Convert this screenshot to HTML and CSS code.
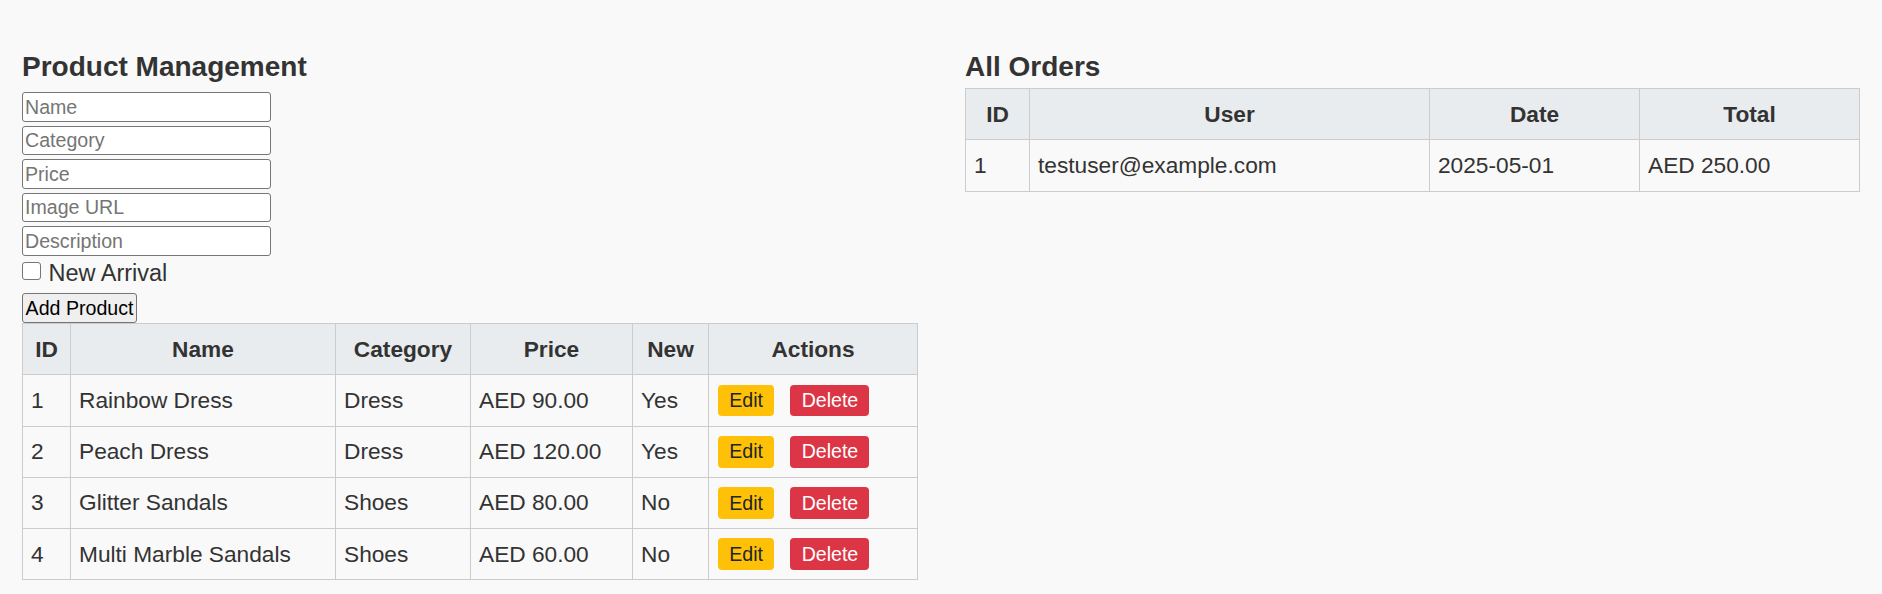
FILE: index.html
```html
<!DOCTYPE html>
<html lang="en">
<head>
<meta charset="utf-8">
<title>Admin</title>
<link rel="stylesheet" href="styles.css">
</head>
<body>
<div class="page">
  <section class="panel">
    <h2 class="title">Product Management</h2>
    <form class="product-form">
      <input class="field" type="text" placeholder="Name">
      <input class="field" type="text" placeholder="Category">
      <input class="field" type="text" placeholder="Price">
      <input class="field" type="text" placeholder="Image URL">
      <input class="field" type="text" placeholder="Description">
      <label class="check"><input class="checkbox" type="checkbox"><span>New Arrival</span></label>
      <button class="btn-add" type="button">Add Product</button>
    </form>
    <table class="grid products-table">
      <colgroup>
        <col class="p-id"><col class="p-name"><col class="p-cat"><col class="p-price"><col class="p-new"><col class="p-act">
      </colgroup>
      <thead>
        <tr><th>ID</th><th>Name</th><th>Category</th><th>Price</th><th>New</th><th>Actions</th></tr>
      </thead>
      <tbody>
        <tr><td>1</td><td>Rainbow Dress</td><td>Dress</td><td>AED 90.00</td><td>Yes</td><td class="actions-cell"><div class="actions"><button class="btn btn-edit" type="button">Edit</button><button class="btn btn-delete" type="button">Delete</button></div></td></tr>
        <tr><td>2</td><td>Peach Dress</td><td>Dress</td><td>AED 120.00</td><td>Yes</td><td class="actions-cell"><div class="actions"><button class="btn btn-edit" type="button">Edit</button><button class="btn btn-delete" type="button">Delete</button></div></td></tr>
        <tr><td>3</td><td>Glitter Sandals</td><td>Shoes</td><td>AED 80.00</td><td>No</td><td class="actions-cell"><div class="actions"><button class="btn btn-edit" type="button">Edit</button><button class="btn btn-delete" type="button">Delete</button></div></td></tr>
        <tr><td>4</td><td>Multi Marble Sandals</td><td>Shoes</td><td>AED 60.00</td><td>No</td><td class="actions-cell"><div class="actions"><button class="btn btn-edit" type="button">Edit</button><button class="btn btn-delete" type="button">Delete</button></div></td></tr>
      </tbody>
    </table>
  </section>
  <section class="panel">
    <h2 class="title">All Orders</h2>
    <table class="grid orders-table">
      <colgroup>
        <col class="o-id"><col class="o-user"><col class="o-date"><col class="o-total">
      </colgroup>
      <thead>
        <tr><th>ID</th><th>User</th><th>Date</th><th>Total</th></tr>
      </thead>
      <tbody>
        <tr><td>1</td><td>testuser@example.com</td><td>2025-05-01</td><td>AED 250.00</td></tr>
      </tbody>
    </table>
  </section>
</div>
</body>
</html>
```

FILE: styles.css
```css
* { box-sizing: border-box; }

html, body {
  margin: 0;
  background: #f9f9f9;
}

body {
  font-family: "Liberation Sans", Arial, sans-serif;
  color: #333;
}

.page {
  display: flex;
  align-items: flex-start;
  gap: 48px;
  padding: 50.8px 22px 0;
}

.panel {
  flex: 1 1 0;
  min-width: 0;
}

.title {
  margin: 0 0 5.5px;
  font-size: 28px;
  line-height: 32px;
  font-weight: 700;
  color: #333;
}

.product-form {
  display: flex;
  flex-direction: column;
  align-items: flex-start;
}

.field {
  display: block;
  width: 248.5px;
  height: 29.4px;
  margin: 4.1px 0 0;
  padding: 0 2px;
  border: 1px solid #767676;
  border-radius: 3px;
  background: #fff;
  font-family: "Liberation Sans", Arial, sans-serif;
  font-size: 19.6px;
  color: #000;
}

.field::placeholder {
  color: #757575;
}

.check {
  display: flex;
  align-items: flex-start;
  margin-top: 4.2px;
  font-size: 23.5px;
  line-height: 26px;
  color: #333;
}

.checkbox {
  appearance: none;
  -webkit-appearance: none;
  flex: 0 0 18.5px;
  width: 18.5px;
  min-width: 18.5px;
  height: 18.5px;
  margin: 1.8px 8px 0 0;
  border: 1px solid #767676;
  border-radius: 3px;
  background: #fff;
}

.btn-add {
  margin-top: 7.4px;
  padding: 2.45px 2.6px;
  border: 1px solid #767676;
  border-radius: 3px;
  background: #efefef;
  color: #000;
  font-family: "Liberation Sans", Arial, sans-serif;
  font-size: 19.6px;
  line-height: 22.5px;
}

.grid {
  width: 100%;
  border-collapse: collapse;
  table-layout: fixed;
  font-size: 22.7px;
  line-height: 26px;
  color: #333;
}

.products-table {
  margin-top: 0.6px;
}

.grid th,
.grid td {
  border: 1px solid #ccc;
  padding: 11.6px 8px 12.6px;
  text-align: left;
  vertical-align: middle;
  white-space: nowrap;
}

.grid th {
  padding: 12.1px 8px;
  background: #e9ecef;
  font-weight: 700;
  text-align: center;
}

.p-id { width: 48px; }
.p-name { width: 265px; }
.p-cat { width: 135px; }
.p-price { width: 162px; }
.p-new { width: 76px; }
.p-act { width: 209px; }

.o-id { width: 64px; }
.o-user { width: 400px; }
.o-date { width: 210px; }
.o-total { width: 220px; }

.grid td.actions-cell {
  padding: 9.25px 8px 9.25px 9px;
}

.actions {
  display: flex;
  gap: 16.3px;
}

.btn {
  padding: 4.6px 11.2px;
  border: 0;
  border-radius: 4px;
  font-family: "Liberation Sans", Arial, sans-serif;
  font-size: 19.6px;
  line-height: 22.5px;
}

.btn-edit {
  background: #ffc107;
  color: #212529;
}

.btn-delete {
  background: #dc3545;
  color: #fff;
}
```
